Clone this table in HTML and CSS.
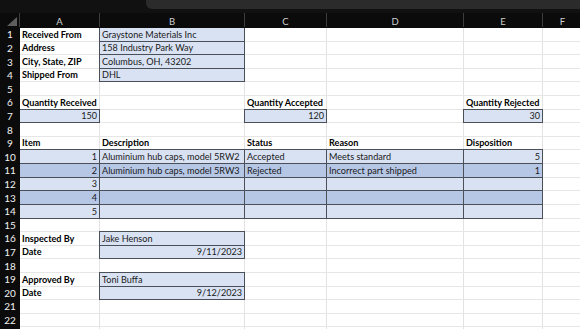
FILE: index.html
```html
<!DOCTYPE html>
<html lang="en">
<head>
  <meta charset="UTF-8" />
  <title>Receiving Inspection</title>
  <link rel="stylesheet" href="styles.css">
</head>
<body>
  <div class="topbar"><div class="formula"></div></div>
  <table class="sheet">
    <colgroup>
      <col class="c-rh"><col class="c-a"><col class="c-b"><col class="c-c"><col class="c-d"><col class="c-e"><col class="c-f"><col class="c-g">
    </colgroup>
    <tr class="heads">
      <th class="corner"><span class="tri"></span></th><th>A</th><th>B</th><th>C</th><th>D</th><th>E</th><th>F</th><th></th>
    </tr>
    <tr><th>1</th><td class="lbl">Received From</td><td class="box">Graystone Materials Inc</td><td></td><td></td><td></td><td></td><td></td></tr>
    <tr><th>2</th><td class="lbl">Address</td><td class="box">158 Industry Park Way</td><td></td><td></td><td></td><td></td><td></td></tr>
    <tr><th>3</th><td class="lbl">City, State, ZIP</td><td class="box">Columbus, OH, 43202</td><td></td><td></td><td></td><td></td><td></td></tr>
    <tr><th>4</th><td class="lbl">Shipped From</td><td class="box">DHL</td><td></td><td></td><td></td><td></td><td></td></tr>
    <tr><th>5</th><td></td><td></td><td></td><td></td><td></td><td></td><td></td></tr>
    <tr><th>6</th><td class="lbl">Quantity Received</td><td></td><td class="lbl">Quantity Accepted</td><td></td><td class="lbl">Quantity Rejected</td><td></td><td></td></tr>
    <tr><th>7</th><td class="box num">150</td><td></td><td class="box num">120</td><td></td><td class="box num">30</td><td></td><td></td></tr>
    <tr><th>8</th><td></td><td></td><td></td><td></td><td></td><td></td><td></td></tr>
    <tr><th>9</th><td class="lbl">Item</td><td class="lbl">Description</td><td class="lbl">Status</td><td class="lbl">Reason</td><td class="lbl">Disposition</td><td></td><td></td></tr>
    <tr class="band"><th>10</th><td class="box num">1</td><td class="box">Aluminium hub caps, model 5RW2</td><td class="box">Accepted</td><td class="box">Meets standard</td><td class="box num">5</td><td></td><td></td></tr>
    <tr class="band alt"><th>11</th><td class="box num">2</td><td class="box">Aluminium hub caps, model 5RW3</td><td class="box">Rejected</td><td class="box">Incorrect part shipped</td><td class="box num">1</td><td></td><td></td></tr>
    <tr class="band"><th>12</th><td class="box num">3</td><td class="box"></td><td class="box"></td><td class="box"></td><td class="box num"></td><td></td><td></td></tr>
    <tr class="band alt"><th>13</th><td class="box num">4</td><td class="box"></td><td class="box"></td><td class="box"></td><td class="box num"></td><td></td><td></td></tr>
    <tr class="band"><th>14</th><td class="box num">5</td><td class="box"></td><td class="box"></td><td class="box"></td><td class="box num"></td><td></td><td></td></tr>
    <tr><th>15</th><td></td><td></td><td></td><td></td><td></td><td></td><td></td></tr>
    <tr><th>16</th><td class="lbl">Inspected By</td><td class="box">Jake Henson</td><td></td><td></td><td></td><td></td><td></td></tr>
    <tr><th>17</th><td class="lbl">Date</td><td class="box num">9/11/2023</td><td></td><td></td><td></td><td></td><td></td></tr>
    <tr><th>18</th><td></td><td></td><td></td><td></td><td></td><td></td><td></td></tr>
    <tr><th>19</th><td class="lbl">Approved By</td><td class="box">Toni Buffa</td><td></td><td></td><td></td><td></td><td></td></tr>
    <tr><th>20</th><td class="lbl">Date</td><td class="box num">9/12/2023</td><td></td><td></td><td></td><td></td><td></td></tr>
    <tr><th>21</th><td></td><td></td><td></td><td></td><td></td><td></td><td></td></tr>
    <tr><th>22</th><td></td><td></td><td></td><td></td><td></td><td></td><td></td></tr>
    <tr><th></th><td></td><td></td><td></td><td></td><td></td><td></td><td></td></tr>
  </table>
</body>
</html>
```

FILE: styles.css
```css
* {
  box-sizing: border-box;
  margin: 0;
  padding: 0;
}
body {
  background: #0e0e0e;
  overflow: hidden;
  font-family: 'Lato', 'Liberation Sans', sans-serif;
  font-size: 9.1px;
  color: #1a1a1a;
}
.topbar {
  height: 13px;
  background: #111;
}
.formula {
  margin-left: 146px;
  height: 9px;
  background: #2b2b2b;
  border-bottom-left-radius: 6px;
}
.sheet {
  width: 622px;
  table-layout: fixed;
  border-collapse: collapse;
  background: #fff;
}
.c-rh { width: 19px; }
.c-a { width: 80px; }
.c-b { width: 145px; }
.c-c { width: 82px; }
.c-d { width: 137px; }
.c-e { width: 79px; }
.c-f { width: 40px; }
.c-g { width: 40px; }
col {
  border-right: 1px solid #e3e3e3;
}
tr {
  height: 13.62px;
  border-bottom: 1px solid #e6e6e6;
}
.sheet .heads {
  height: 14px;
  border-bottom: none;
}
.heads th {
  background: #0b0b0b;
  color: #cfcfcf;
  font-weight: normal;
  font-size: 9.5px;
  border-right: 1px solid #3c3c3c;
  border-bottom: 1px solid #0b0b0b;
}
th {
  background: #0b0b0b;
  color: #f2f2f2;
  font-weight: normal;
  font-size: 10px;
  text-align: center;
  border: 1px solid #0b0b0b;
  line-height: 11px;
  padding-top: 1px;
}
.heads .corner {
  position: relative;
}
.tri {
  position: absolute;
  right: 2px;
  bottom: 1px;
  width: 0;
  height: 0;
  border-left: 10px solid transparent;
  border-bottom: 9px solid #5e5e5e;
}
td {
  padding: 0 2px;
  line-height: 12px;
  vertical-align: bottom;
  white-space: nowrap;
  overflow: visible;
}
.lbl {
  font-weight: bold;
  color: #000;
}
.box {
  background: #d9e2f3;
  border: 1px solid #4b4f58;
}
.alt .box {
  background: #b6c7e6;
}
.num {
  text-align: right;
}
```
